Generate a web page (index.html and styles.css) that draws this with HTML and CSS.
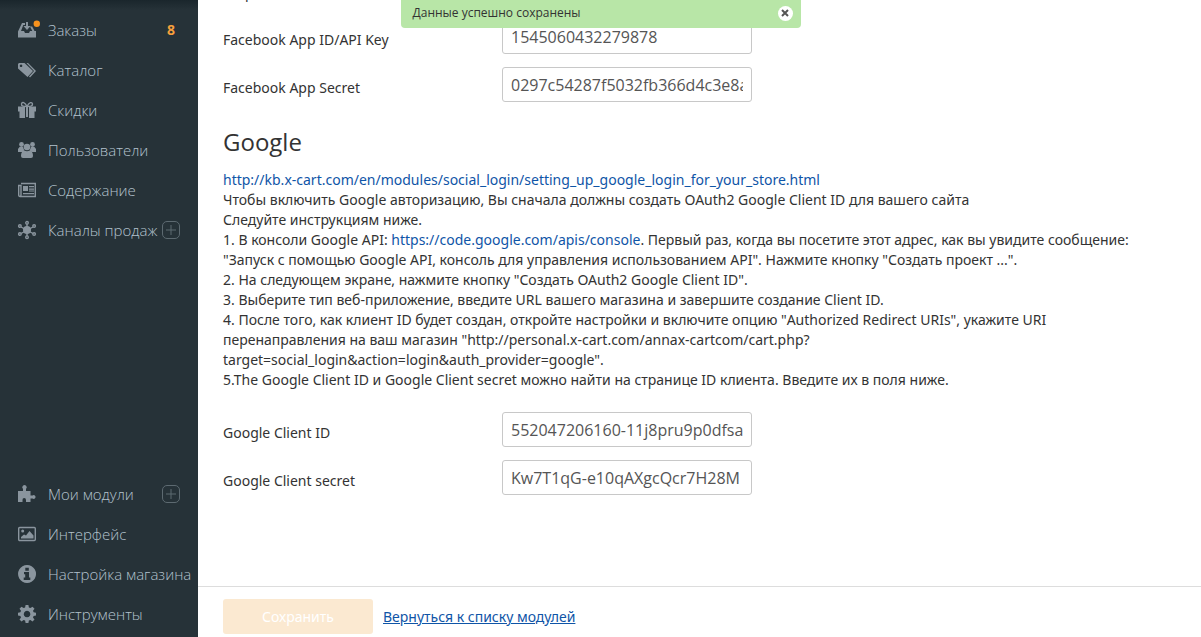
FILE: index.html
```html
<!DOCTYPE html>
<html lang="ru">
<head>
<meta charset="utf-8">
<title>Social login</title>
<link rel="stylesheet" href="styles.css">
</head>
<body>
<nav class="sidebar">
  <ul class="menu">
    <li><a class="item" href="#"><svg class="icon" viewBox="0 0 18 18"><path d="M4 2h3v2H5.300L3 10h3l1 2h4l1-2h6v6.500H0V10.500z"/><path d="M8 1h2v4h2.500L9 9 5.500 5H8z"/><path d="M12 5.500h2.200l2.300 4.500h-2.200z"/><circle class="dot" cx="18.800" cy="2.800" r="3.200"/></svg><span class="label">Заказы</span><span class="count">8</span></a></li>
    <li><a class="item" href="#"><svg class="icon" viewBox="0 0 18 18"><path fill-rule="evenodd" d="M1 2h5.500L15 10l-5.500 6L0 7.500V3zM3 3.500a1.300 1.300 0 1 0 .1 0z"/><path d="M8.500 2H10l8 8-6 6.500-1-.9L16 10z"/></svg><span class="label">Каталог</span></a></li>
    <li><a class="item" href="#"><svg class="icon" viewBox="0 0 18 18"><path d="M0 5.500h7v5H0zM11 5.500h7v5h-7zM1.500 10H7v7H1.500zM11 10h5.500v7H11zM8 6h2v10H8z"/><path class="line" d="M9 5.500C7 1 4 .5 3.500 3S6 5.500 9 5.500 14.800 5.300 14.500 3 11 1 9 5.500z"/></svg><span class="label">Скидки</span></a></li>
    <li><a class="item" href="#"><svg class="icon" viewBox="0 0 18 18"><circle cx="3.500" cy="3.500" r="2.400"/><circle cx="14.500" cy="3.500" r="2.400"/><circle cx="9" cy="6" r="3.300"/><path d="M0 11V8l1.500-2H5l1.200 3.200L4 11zM18 11V8l-1.500-2H13l-1.200 3.200L14 11zM6.500 9.500Q9 11 11.500 9.500 15 10 15 15q0 2-2 2H5q-2 0-2-2 0-5 3.500-5.500z"/></svg><span class="label">Пользователи</span></a></li>
    <li><a class="item" href="#"><svg class="icon" viewBox="0 0 18 18"><path class="line" d="M3 2.500h14.300v13H2Q.7 15.500.7 14V4.500H3V14q0 1.500-1.200 1.500"/><path d="M5 5h5v5H5zM11 5h5v1.300h-5zM11 7.500h5v1.300h-5zM11 9.500h5v1h-5zM5 12h11v1.300H5z"/></svg><span class="label">Содержание</span></a></li>
    <li><a class="item" href="#"><svg class="icon" viewBox="0 0 18 18"><circle cx="9" cy="9" r="4"/><g class="line"><path d="M9 3v12M3 6l12 6.500M3 12.500L15 6"/><circle cx="9" cy="1.800" r="1.300"/><circle cx="9" cy="16.200" r="1.300"/><circle cx="1.900" cy="5" r="1.300"/><circle cx="16.100" cy="5" r="1.300"/><circle cx="1.900" cy="13" r="1.300"/><circle cx="16.100" cy="13" r="1.300"/></g></svg><span class="label">Каналы продаж</span><svg class="plus" viewBox="0 0 18 18"><rect x=".5" y=".5" width="17" height="17" rx="4.500"/><path d="M9 4v10M4 9h10"/></svg></a></li>
  </ul>
  <ul class="menu">
    <li><a class="item" href="#"><svg class="icon" viewBox="0 0 18 18"><path d="M0 6h5V4a2.200 2.200 0 1 1 3 0v2h4.500v4.500h2a1.900 1.900 0 1 1 0 3h-2V17H8v-2q0-2-1.800-2T4.500 15v2H0z"/></svg><span class="label">Мои модули</span><svg class="plus" viewBox="0 0 18 18"><rect x=".5" y=".5" width="17" height="17" rx="4.500"/><path d="M9 4v10M4 9h10"/></svg></a></li>
    <li><a class="item" href="#"><svg class="icon" viewBox="0 0 18 18"><rect class="line" x=".7" y="2.500" width="16.600" height="13" rx="1"/><circle cx="4.700" cy="6" r="1.500"/><path d="M3 13.500V12l3-2.500 2 1L11.500 6 15.500 10.500v3z"/></svg><span class="label">Интерфейс</span></a></li>
    <li><a class="item" href="#"><svg class="icon" viewBox="0 0 18 18"><path fill-rule="evenodd" d="M9 0a9 9 0 1 0 .1 0zM7.300 2.700h3.500v3H7.300zM6 7h5v5.500h1.300V15H5.700v-2.500H7.200V9.300H6z"/></svg><span class="label">Настройка магазина</span></a></li>
    <li><a class="item" href="#"><svg class="icon" viewBox="0 0 18 18"><path fill-rule="evenodd" d="M7.600 0h2.800l.5 2.500 1.500.6L14.500 1.700l2 2-1.500 2 .6 1.600 2.400.4v2.700l-2.400.5-.6 1.500 1.500 2.100-2 2-2.100-1.500-1.500.6-.5 2.400H7.600l-.5-2.400-1.500-.6-2.100 1.500-2-2L3 12.400l-.6-1.500L0 10.400V7.700l2.400-.4L3 5.700l-1.500-2 2-2 2.100 1.400 1.500-.6zM9 5.700a3.300 3.300 0 1 0 .1 0z"/></svg><span class="label">Инструменты</span></a></li>
  </ul>
</nav>
<main class="main">
  <form class="form">
    <div class="content">
      <p class="previous">Help</p>
      <div class="row"><label for="fb-id">Facebook App ID/API Key</label><input id="fb-id" type="text" value="1545060432279878"></div>
      <div class="row"><label for="fb-secret">Facebook App Secret</label><input id="fb-secret" type="text" value="0297c54287f5032fb366d4c3e8a"></div>
      <h2 class="title">Google</h2>
      <p class="help"><a href="#">http://kb.x-cart.com/en/modules/social_login/setting_up_google_login_for_your_store.html</a><br>
      Чтобы включить Google авторизацию, Вы сначала должны создать OAuth2 Google Client ID для вашего сайта<br>
      Следуйте инструкциям ниже.<br>
      1. В консоли Google API: <a href="#">https://code.google.com/apis/console</a>. Первый раз, когда вы посетите этот адрес, как вы увидите сообщение: "Запуск с помощью Google API, консоль для управления использованием API". Нажмите кнопку "Создать проект ...".<br>
      2. На следующем экране, нажмите кнопку "Создать OAuth2 Google Client ID".<br>
      3. Выберите тип веб-приложение, введите URL вашего магазина и завершите создание Client ID.<br>
      4. После того, как клиент ID будет создан, откройте настройки и включите опцию "Authorized Redirect URIs", укажите URI перенаправления на ваш магазин "http://personal.x-cart.com/annax-cartcom/cart.php?<br>target=social_login&amp;action=login&amp;auth_provider=google".<br>
      5.The Google Client ID и Google Client secret можно найти на странице ID клиента. Введите их в поля ниже.</p>
      <div class="row"><label for="g-id">Google Client ID</label><input id="g-id" type="text" value="552047206160-11j8pru9p0dfsa5"></div>
      <div class="row"><label for="g-secret">Google Client secret</label><input id="g-secret" type="text" value="Kw7T1qG-e10qAXgcQcr7H28M"></div>
    </div>
    <footer class="actions">
      <button class="save" type="submit" disabled>Сохранить</button>
      <a class="back" href="#">Вернуться к списку модулей</a>
    </footer>
  </form>
</main>
<div class="notice" role="status">
  <span>Данные успешно сохранены</span>
  <button class="close" type="button" aria-label="Закрыть"><svg viewBox="0 0 8 8"><path d="M1 1l6 6M7 1L1 7"/></svg></button>
</div>
</body>
</html>
```

FILE: styles.css
```css
* { box-sizing: border-box; }
body {
  margin: 0;
  display: flex;
  height: 100vh;
  overflow: hidden;
  background: #fff;
  color: #333;
  font: 14px/20px "Noto Sans", "Open Sans", sans-serif;
}
a { color: #0f55a7; text-decoration: none; }

.sidebar {
  flex: none;
  width: 198px;
  display: flex;
  flex-direction: column;
  justify-content: space-between;
  padding: 10px 0 3px;
  background: linear-gradient(#1a262c, #263238 10px);
  font-family: "Open Sans", "Noto Sans", sans-serif;
  font-size: 15px;
}
.menu { margin: 0; padding: 0; list-style: none; }
.item {
  display: flex;
  align-items: center;
  height: 40px;
  padding: 0 18px;
  color: #b4c3ce;
  font-weight: 300;
  white-space: nowrap;
}
.icon {
  flex: none;
  width: 18px;
  height: 18px;
  margin-right: 12px;
  overflow: visible;
  fill: #8a959e;
}
.label { padding-bottom: 1px; }
.line { fill: none; stroke: #8a959e; stroke-width: 1.400; }
.dot { fill: #f6921e; }
.count { margin: 0 5px 0 auto; color: #f6a03c; font-size: 14px; font-weight: 700; }
.plus {
  flex: none;
  width: 18px;
  height: 18px;
  margin-left: auto;
  fill: none;
  stroke: #5d6a71;
}

.main { flex: 1; min-width: 0; display: flex; }
.form { flex: 1; min-width: 0; display: flex; flex-direction: column; }
.content { flex: 1; min-height: 0; padding: 0 40px 0 25px; margin-top: -17px; }
.previous { margin: 0 0 16px; }
.row { display: flex; height: 35px; margin-bottom: 13px; }
.row label { width: 279px; padding-top: 11px; }
.row input {
  width: 250px;
  padding: 0 8px;
  border: 1px solid #c8c8c8;
  border-radius: 3px;
  background: #fff;
  color: #555;
  font: 16px/20px "Open Sans", "Noto Sans", sans-serif;
}
.title {
  margin: 24px 0 12px;
  font: 400 24px/32px "Open Sans", "Noto Sans", sans-serif;
}
.help { margin: 0 0 22px; }

.actions {
  display: flex;
  align-items: center;
  gap: 10px;
  height: 51px;
  padding: 9px 25px 0;
  border-top: 1px solid #ddd;
}
.save {
  width: 150px;
  height: 35px;
  border: 0;
  border-radius: 3px;
  background: #fbe9d1;
  color: #fff;
  font: inherit;
}
.back { text-decoration: underline; }

.notice {
  position: fixed;
  top: 0;
  left: 50%;
  width: 400px;
  height: 28px;
  margin-left: -200px;
  display: flex;
  align-items: center;
  justify-content: space-between;
  padding: 0 8px 2px 12px;
  border-radius: 0 0 4px 4px;
  background: #b8e6a7;
  font-family: "Open Sans", "Noto Sans", sans-serif;
  font-size: 12px;
}
.close {
  display: flex;
  align-items: center;
  justify-content: center;
  width: 15px;
  height: 15px;
  padding: 0;
  border: 0;
  border-radius: 50%;
  background: #fff;
}
.close svg { width: 8px; height: 8px; stroke: #555; stroke-width: 2; }
```
